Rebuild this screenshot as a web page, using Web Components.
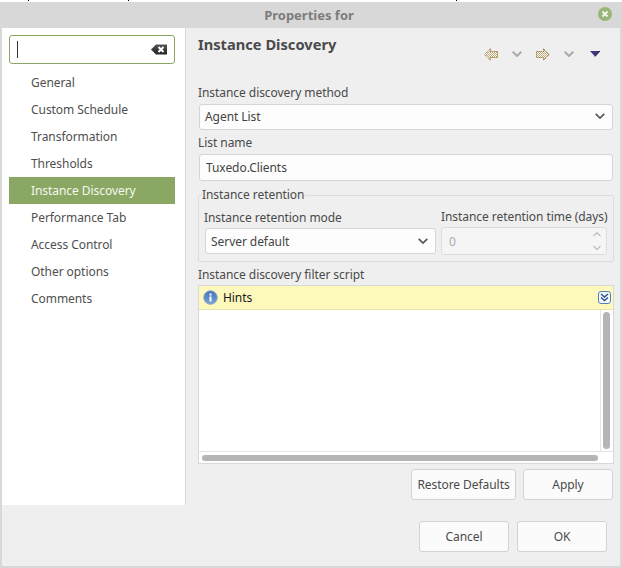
<!DOCTYPE html>
<html><head><meta charset="utf-8"><style>
html,body{margin:0;padding:0;width:622px;height:568px;overflow:hidden;background:#fff}
body{font:12px "Noto Sans",sans-serif;letter-spacing:-.06px;color:#4a4a4a}
</style></head><body>
<prop-window></prop-window>
<script>
const base=`*{box-sizing:border-box}`;
function def(name,css,html){
  customElements.define(name,class extends HTMLElement{
    constructor(){super();this.attachShadow({mode:'open'}).innerHTML=`<style>${base}${css}</style>${html}`;}
  });
}
const chev=`<svg width="10" height="6" viewBox="0 0 10 6"><path d="M.7 .8 5 5 9.300 .8" fill="none" stroke="#555" stroke-width="1.700"/></svg>`;
const grayChev=`<svg width="10" height="6" viewBox="0 0 10 6"><path d="M.7 .8 5 5 9.300 .8" fill="none" stroke="#aaa" stroke-width="2"/></svg>`;
const dither=`<defs><pattern id="d" width="2" height="2" patternUnits="userSpaceOnUse"><rect width="2" height="2" fill="#fff"/><rect width="1" height="1" fill="#b9a779"/><rect x="1" y="1" width="1" height="1" fill="#b9a779"/></pattern></defs>`;

def('nav-item',`
:host{display:flex;align-items:center;height:27px;padding-left:22px;color:#4f4f4f}
:host([selected]){background:#8aa864;color:#f4f7ee}
`,`<slot></slot>`);

def('side-bar',`
:host{display:flex;flex-direction:column;width:184px;background:#fff;border-right:1px solid #d8d8d8;padding:7px 10px 0 7px;height:477px}
.s{height:29px;border:1px solid #8aa864;border-radius:3px;display:flex;align-items:center;justify-content:space-between;padding:0 7px;margin-bottom:5px}
.c{width:1px;height:17px;background:#333}
`,`<div class="s"><span class="c"></span>
<svg width="16" height="11" viewBox="0 0 16 11"><defs><linearGradient id="g" x1="0" y1="0" x2="0" y2="1"><stop offset="0" stop-color="#555"/><stop offset="1" stop-color="#222"/></linearGradient></defs><path d="M0 5.500 5 .5H16V10.500H5Z" fill="url(#g)"/><path d="M7.500 3 12.500 8M12.500 3 7.500 8" stroke="#fff" stroke-width="2"/></svg></div><slot></slot>`);

def('tool-bar',`
:host{display:flex;align-items:center;height:18px}
svg{display:block}
`,`
<svg style="margin-right:14px" width="14" height="13" viewBox="0 0 14 13">${dither}<path d="M.7 6.500 6.500 .8V3.500H13.500V9.500H6.500V12.200Z" fill="url(#d)" stroke="#8a5a10" stroke-dasharray="1 1"/></svg>
<span style="margin-right:14px;display:block">${grayChev}</span>
<svg style="margin-right:14px" width="14" height="13" viewBox="0 0 14 13"><path d="M13.300 6.500 7.500 .8V3.500H.5V9.500H7.500V12.200Z" fill="url(#d)" stroke="#8a5a10" stroke-dasharray="1 1"/></svg>
<span style="margin-right:16px;display:block">${grayChev}</span>
<svg width="10" height="6" viewBox="0 0 10 6"><path d="M0 0H10L5 5.500Z" fill="#3d3580"/><path d="M10 0 5 5.500" stroke="#222" stroke-width="1"/></svg>`);

def('combo-box',`
:host{display:flex;align-items:center;justify-content:space-between;background:#fdfdfd;border:1px solid #d5d5d5;border-radius:3px;padding:0 7px 0 5px;height:26px;color:#444}
svg{display:block}
`,`<slot></slot>${chev}`);

def('text-field',`
:host{display:flex;align-items:center;background:#fdfdfd;border:1px solid #d5d5d5;border-radius:3px;padding:0 6px;height:27px;color:#444}
`,`<slot></slot>`);

def('spin-box',`
:host{display:flex;align-items:center;justify-content:space-between;background:#f5f5f5;border:1px solid #dcdcdc;border-radius:3px;padding:0 4px 0 7px;height:28px;color:#aaa}
.a{display:flex;flex-direction:column;gap:8px}
svg{display:block}
`,`<slot></slot><span class="a"><svg width="10" height="6" viewBox="0 0 10 6"><path d="M1.500 5 5 1.500 8.500 5" fill="none" stroke="#bbb" stroke-width="1.200"/></svg><svg width="10" height="6" viewBox="0 0 10 6"><path d="M1.500 1 5 4.500 8.500 1" fill="none" stroke="#bbb" stroke-width="1.200"/></svg></span>`);

def('push-button',`
:host{display:flex;align-items:center;justify-content:center;height:31px;background:#fbfbfb;border:1px solid #d2d2d2;border-radius:3px;color:#4a4a4a}
`,`<slot></slot>`);

def('retention-group',`
:host{display:block;position:relative;height:67px;border:1px solid #dcdcdc;border-radius:2px;margin-top:14px;width:416px}
.l{position:absolute;left:2px;top:-10px;background:#efefef;padding:0 1px;line-height:17px}
.g{display:grid;grid-template-columns:231px 166px;column-gap:5px;padding:11px 0 0 6px}
.c1{padding-top:2px}
.c2{padding-top:1px}
.lb{line-height:18px;height:18px;margin-bottom:1px;white-space:nowrap}
.c1 .lb{margin-left:-1px}
`,`<div class="l">Instance retention</div><div class="g">
<div class="c1"><div class="lb">Instance retention mode</div><combo-box>Server default</combo-box></div>
<div class="c2"><div class="lb">Instance retention time (days)</div><spin-box>0</spin-box></div></div>`);

def('hint-editor',`
:host{display:flex;flex-direction:column;width:416px;height:179px;border:1px solid #d8d8d8;background:#fff}
.h{height:24px;flex:none;background:#fdf9bd;border-bottom:1px solid #e8e4b0;display:flex;align-items:center;padding:0 2px 0 4px;color:#1a1a1a}
.h span{flex:1;margin-left:5px}
.m{flex:none;height:142px;display:flex;justify-content:flex-end;border-bottom:1px solid #e4e4e4}
.vb{width:13px;border-left:1px solid #e4e4e4;padding:2px 3px 0 2px}
.v{width:7px;height:137px;border-radius:4px;background:#b5b5b5}
.sb{height:11px;padding:3px 15px 0 3px}
.t{height:6px;border-radius:3px;background:#b5b5b5}
svg{display:block}
`,`<div class="h"><svg width="15" height="15" viewBox="0 0 15 15"><defs><linearGradient id="i" x1="0" y1="0" x2="0" y2="1"><stop offset="0" stop-color="#3f73b5"/><stop offset="1" stop-color="#7aa5d8"/></linearGradient></defs><circle cx="7.500" cy="7.500" r="6.800" fill="url(#i)" stroke="#8fa9c9"/><rect x="6.500" y="6.500" width="2" height="5" fill="#fff"/><rect x="6.500" y="3.500" width="2" height="2" fill="#fff"/></svg><span>Hints</span>
<svg width="13" height="13" viewBox="0 0 13 13"><rect x=".5" y=".5" width="12" height="12" rx="2.500" fill="#f4f8fd" stroke="#5580bb"/><path d="M3 3 6.500 6 10 3M3 6.500 6.500 9.500 10 6.500" fill="none" stroke="#2b4f8a" stroke-width="1.400"/></svg></div>
<div class="m"><div class="vb"><div class="v"></div></div></div><div class="sb"><div class="t"></div></div>`);

def('prop-window',`
:host{display:flex;flex-direction:column;width:622px;height:568px;background:#fff}
.top{height:2px;flex:none;background:linear-gradient(#000,#000) 28px 0/1px 1px no-repeat,linear-gradient(#000,#000) 128px 0/1px 1px no-repeat,linear-gradient(#000,#000) 456px 0/1px 1px no-repeat,#fff}
.win{flex:1;display:flex;flex-direction:column;background:#efefef;border:solid #d8d8d8;border-width:0 2px 2px 2px;min-height:0}
.tb{height:26px;margin:0 -2px;padding-right:4px;background:#d8d8d8;display:flex;align-items:center;justify-content:center;position:relative;font-weight:700;font-size:13px;letter-spacing:0;color:#7c7c7c;flex:none}
.x{position:absolute;right:10px;top:5px}
.main{display:flex;flex:none;height:477px}
.p{flex:1;padding:0 7px 0 12px;display:flex;flex-direction:column;min-width:0}
.head{display:flex;justify-content:space-between;align-items:flex-start;height:56px;padding-top:7px}
h2{margin:0;font-size:14.67px;font-weight:700;letter-spacing:0;color:#4a4a4a;line-height:18px}
tool-bar{margin-top:10px;margin-right:13px}
.lb{line-height:18px;height:18px}
.lb.f{margin-bottom:2px}
combo-box.m{margin-left:1px;width:414px;padding-bottom:2px}
text-field{margin-left:1px;width:414px}
.lb.n{margin-top:4px;margin-bottom:2px}
.lb.s{margin-top:4px;margin-bottom:1px}
.btns{display:flex;justify-content:flex-end;gap:7px;margin-top:5px}
.btns push-button:first-child{width:105px}
.btns push-button:last-child{width:90px}
.foot{flex:1;display:flex;justify-content:flex-end;gap:8px;padding:16px 13px 0 0}
.foot push-button{width:90px}
`,`<div class="top"></div><div class="win"><div class="tb">Properties for<svg class="x" width="14" height="14" viewBox="0 0 14 14"><circle cx="7" cy="7" r="7" fill="#97b677"/><path d="M4.500 4.500 9.500 9.500M9.500 4.500 4.500 9.500" stroke="#f4f7ee" stroke-width="1.800"/></svg></div>
<div class="main"><side-bar>
<nav-item>General</nav-item><nav-item>Custom Schedule</nav-item><nav-item>Transformation</nav-item><nav-item>Thresholds</nav-item><nav-item selected>Instance Discovery</nav-item><nav-item>Performance Tab</nav-item><nav-item>Access Control</nav-item><nav-item>Other options</nav-item><nav-item>Comments</nav-item>
</side-bar>
<div class="p"><div class="head"><h2>Instance Discovery</h2><tool-bar></tool-bar></div>
<div class="lb f">Instance discovery method</div><combo-box class="m">Agent List</combo-box>
<div class="lb n">List name</div><text-field>Tuxedo.Clients</text-field>
<retention-group></retention-group>
<div class="lb s">Instance discovery filter script</div>
<hint-editor></hint-editor>
<div class="btns"><push-button>Restore Defaults</push-button><push-button>Apply</push-button></div>
</div></div>
<div class="foot"><push-button>Cancel</push-button><push-button>OK</push-button></div>
</div>`);
</script>
</body></html>
